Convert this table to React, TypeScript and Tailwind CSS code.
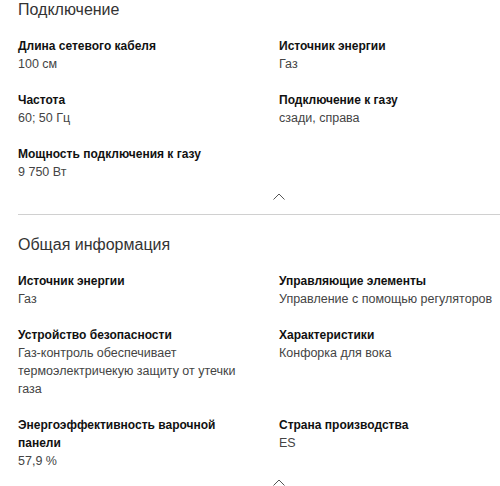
import React from "react";

type Item = { label: string; value: string };

const sec1: Item[] = [
  { label: "Длина сетевого кабеля", value: "100 см" },
  { label: "Источник энергии", value: "Газ" },
  { label: "Частота", value: "60; 50 Гц" },
  { label: "Подключение к газу", value: "сзади, справа" },
  { label: "Мощность подключения к газу", value: "9 750 Вт" },
];

const sec2: Item[] = [
  { label: "Источник энергии", value: "Газ" },
  { label: "Управляющие элементы", value: "Управление с помощью регуляторов" },
  { label: "Устройство безопасности", value: "Газ-контроль обеспечивает термоэлектричекую защиту от утечки газа" },
  { label: "Характеристики", value: "Конфорка для вока" },
  { label: "Энергоэффективность варочной панели", value: "57,9 %" },
  { label: "Страна производства", value: "ES" },
];

function Chevron() {
  return (
    <svg width="12" height="7" viewBox="0 0 12 7" fill="none">
      <path d="M0.5 6.5 L6 1 L11.5 6.5" stroke="#555" strokeWidth="1" />
    </svg>
  );
}

function Grid({ items }: { items: Item[] }) {
  return (
    <div className="grid grid-cols-[261px_1fr] gap-y-[18px]">
      {items.map((it, i) => (
        <div key={i} className={i % 2 === 0 ? "pr-[29px]" : ""}>
          <div className="text-[12px] leading-[18px] font-bold text-[#111]">{it.label}</div>
          <div className="text-[12.5px] leading-[18px] text-[#444]">{it.value}</div>
        </div>
      ))}
    </div>
  );
}

export default function App() {
  return (
    <div className="w-[500px] h-[486px] overflow-hidden bg-white pl-[18px]" style={{ fontFamily: '"Liberation Sans", Arial, sans-serif' }}>
      <div className="text-[16px] leading-5 text-[#333]">Подключение</div>
      <div className="mt-[17px]">
        <Grid items={sec1} />
      </div>
      <div className="flex justify-center pt-[12px] w-[522px]">
        <Chevron />
      </div>
      <div className="mt-[14px] border-t border-[#d0d0d0]" />
      <div className="mt-[20px] text-[16px] leading-5 text-[#333]">Общая информация</div>
      <div className="mt-[17px]">
        <Grid items={sec2} />
      </div>
      <div className="flex justify-center pt-[9px] w-[522px]">
        <Chevron />
      </div>
    </div>
  );
}
